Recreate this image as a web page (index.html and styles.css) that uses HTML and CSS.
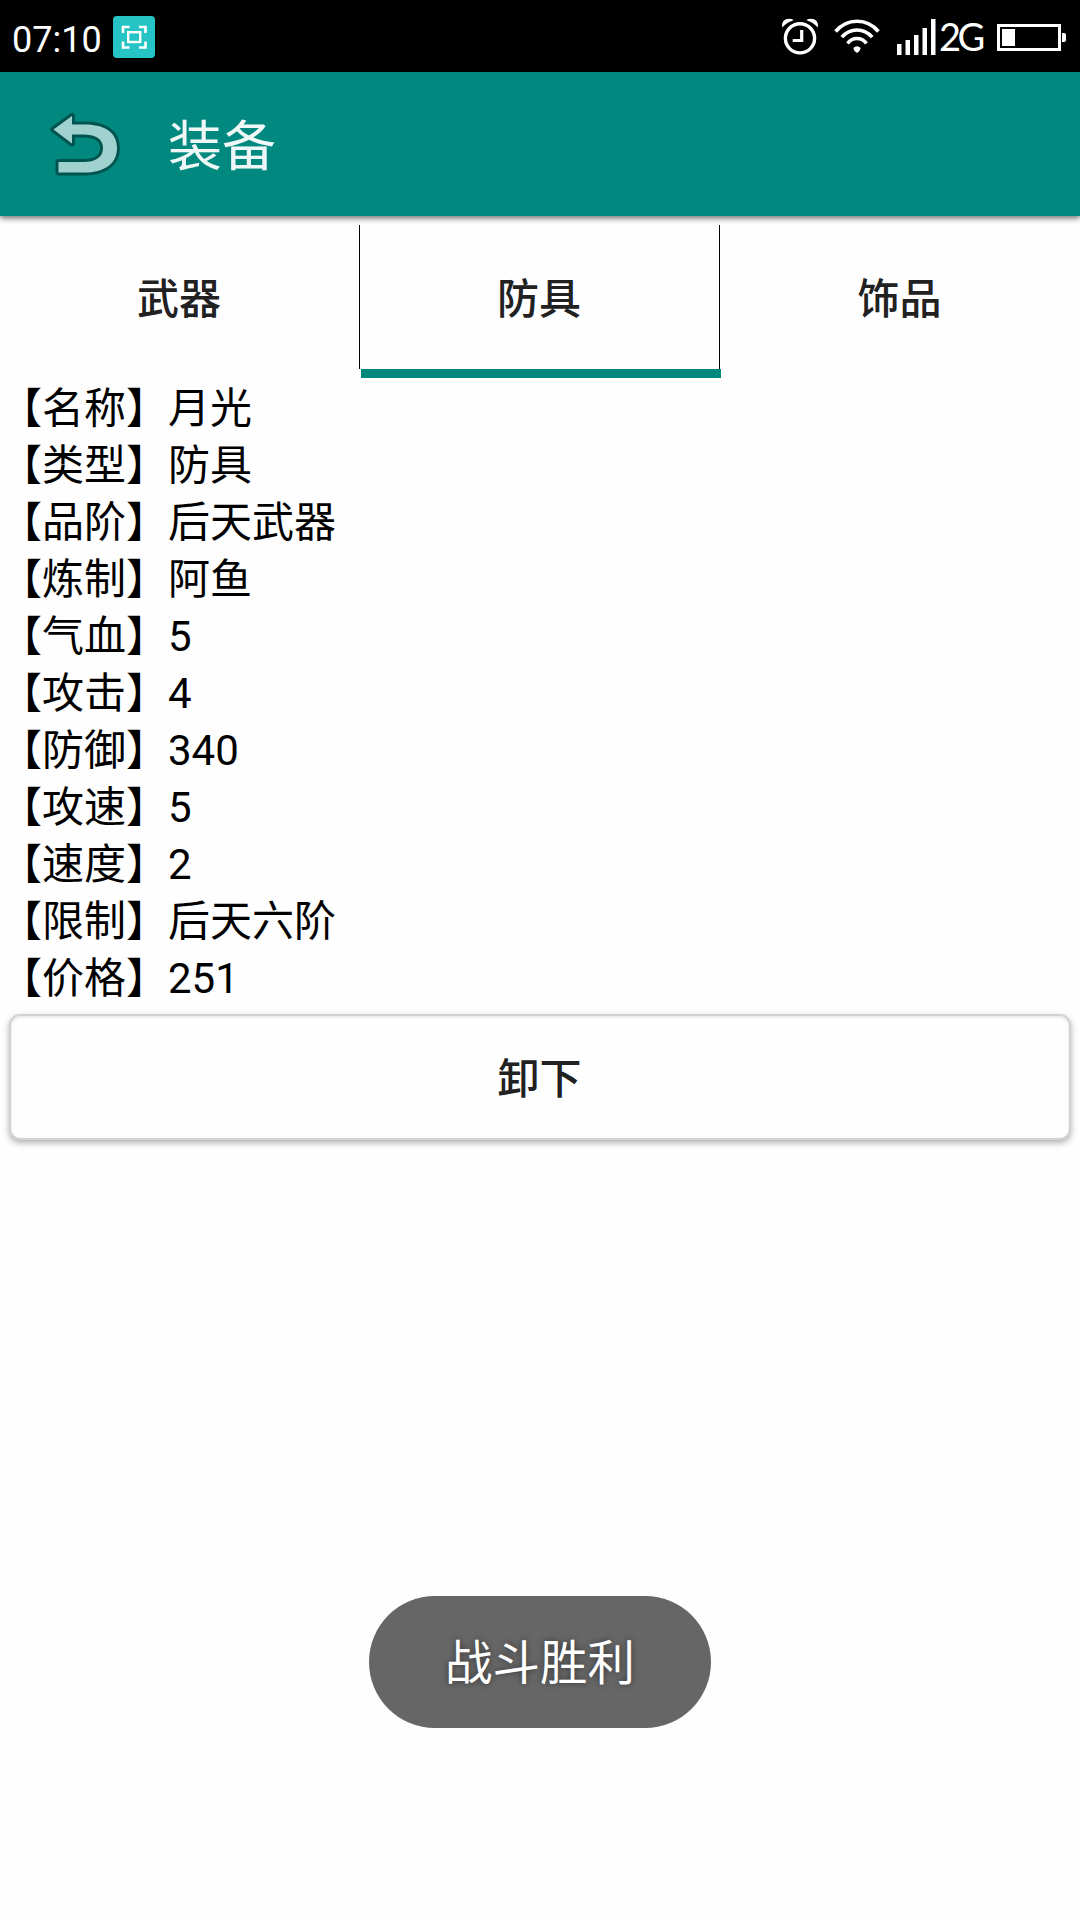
FILE: index.html
```html
<!DOCTYPE html>
<html lang="zh-CN">
<head>
  <meta charset="utf-8">
  <title>装备</title>
  <link rel="stylesheet" href="styles.css">
</head>
<body>
  <div class="status-bar">
    <span class="clock">07:10</span>
    <svg class="capture-icon" width="42" height="42" viewBox="0 0 42 42" fill="none" stroke="#fff">
      <rect width="42" height="42" rx="4" fill="#26c4c4" stroke="none"/>
      <rect x="15.2" y="16.2" width="12" height="9.8" stroke-width="2.4"/>
      <path d="M10 17v-6h6.5M26 11h6.500v6M32.500 25.500v6H26M16.500 31.500H10v-6" stroke-width="2.6"/>
    </svg>
    <div class="status-icons">
      <svg class="alarm" width="38" height="38" viewBox="0 0 38 38" fill="none" stroke="#fff">
        <circle cx="19" cy="21.300" r="14.600" stroke-width="3.4"/>
        <path d="M20.700 13v10.500h-9" stroke-width="3.2"/>
        <path d="M1.200 10.500Q0 1.500 9 1.800Q12 2 12.500 3.200Q6 5 1.200 10.500ZM36.800 10.500Q38 1.500 29 1.800Q26 2 25.500 3.200Q32 5 36.800 10.500Z" fill="#fff" stroke="none"/>
      </svg>
      <svg class="wifi" width="46" height="36" viewBox="0 0 46 36" fill="none" stroke="#fff" stroke-width="3.6">
        <path d="M1.600 13.500Q10 3.200 23 3.200T44.400 13.500"/>
        <path d="M7.800 19.200Q14 12 23 12T38.200 19.200"/>
        <path d="M13.600 25.500Q17 20.500 23 20.500T32.400 25.500"/>
        <path d="M19.300 30Q23 26.500 26.700 30Q26.500 32.500 23 35Q19.500 32.500 19.300 30Z" fill="#fff" stroke="none"/>
      </svg>
      <svg class="signal" width="40" height="36" viewBox="0 0 40 36" fill="#fff">
        <rect x="0" y="25" width="4.500" height="11"/>
        <rect x="8.500" y="21" width="4.500" height="15"/>
        <rect x="17" y="16" width="4.500" height="20"/>
        <rect x="25.500" y="9" width="4.500" height="27"/>
        <rect x="34" y="0" width="4.500" height="36"/>
      </svg>
      <span class="network">2G</span>
      <svg class="battery" width="70" height="28" viewBox="0 0 70 28">
        <rect x="1.500" y="1.500" width="61" height="24" fill="none" stroke="#fff" stroke-width="3"/>
        <rect x="5" y="5" width="13" height="17" fill="#fff"/>
        <path d="M65 9h2q2 0 2 2v5q0 2-2 2h-2z" fill="#fff"/>
      </svg>
    </div>
  </div>

  <header class="app-bar">
    <svg class="back" width="72" height="66" viewBox="0 0 72 66">
      <path d="M5.500 18.500L24 5v8.500h13C53 13.500 69 19 69 37S53 61.500 37 61.500H10.500V51h25c12 0 19.500-4.500 19.500-14S47 23.500 35 23.500H24v9Z" fill="#9fd2cf" stroke="#00544f" stroke-width="6" stroke-linejoin="round" paint-order="stroke"/>
    </svg>
    <h1>装备</h1>
  </header>

  <nav class="tabs">
    <button class="tab">武器</button>
    <button class="tab active">防具</button>
    <button class="tab">饰品</button>
  </nav>

  <main>
    <div class="details">
      <p>【名称】月光</p>
      <p>【类型】防具</p>
      <p>【品阶】后天武器</p>
      <p>【炼制】阿鱼</p>
      <p>【气血】5</p>
      <p>【攻击】4</p>
      <p>【防御】340</p>
      <p>【攻速】5</p>
      <p>【速度】2</p>
      <p>【限制】后天六阶</p>
      <p>【价格】251</p>
    </div>
    <button class="unequip">卸下</button>
  </main>

  <div class="toast">战斗胜利</div>
</body>
</html>
```
FILE: styles.css
```css
* {
  box-sizing: border-box;
}

body {
  margin: 0;
  height: 1920px;
  background: #fefefe;
  color: #000;
  font-family: Roboto, "Noto Sans CJK SC", sans-serif;
  font-size: 42px;
  text-spacing-trim: space-all;
  overflow: hidden;
}

button {
  padding: 0 1px 4px 0;
  border: none;
  background: none;
  font: inherit;
  font-weight: 500;
  color: #212121;
}

.status-bar {
  display: flex;
  align-items: flex-start;
  height: 72px;
  padding: 16px 13px 0 12px;
  background: #000;
  color: #fff;
}

.clock {
  width: 101px;
  font-size: 36px;
  line-height: 48px;
}

.status-icons {
  display: flex;
  margin-left: auto;
}

.alarm {
  margin: 1px 15px 0 0;
}

.wifi {
  margin: 2px 17px 0 0;
}

.signal {
  margin-top: 3px;
}

.network {
  width: 60px;
  padding-left: 2px;
  font-family: Lato, sans-serif;
  font-size: 38px;
  letter-spacing: -3.5px;
  line-height: 41px;
}

.battery {
  margin-top: 8px;
}

.app-bar {
  display: flex;
  align-items: center;
  height: 144px;
  padding-left: 48px;
  background: #018980;
  box-shadow: 0 2px 6px rgba(0, 0, 0, 0.6);
}

.app-bar h1 {
  margin: 0 0 0 48px;
  padding-bottom: 4px;
  font-size: 54px;
  font-weight: 400;
  color: #eff8f7;
}

.tabs {
  display: flex;
  height: 153px;
  margin-top: 9px;
}

.tab {
  position: relative;
  width: 360px;
  height: 144px;
  border-right: 1px solid #000;
}

.tab:last-child {
  border-right: none;
}

.tab.active::after {
  content: "";
  position: absolute;
  top: 144px;
  left: 1px;
  width: 360px;
  height: 9px;
  background: #018980;
}

.details {
  padding: 2px 0 7px;
}

.details p {
  height: 57px;
  margin: 0;
  line-height: 57px;
}

.unequip {
  display: block;
  width: 1062px;
  height: 126px;
  margin: 0 auto;
  border: 2px solid #d2d2d2;
  border-radius: 11px;
  background: #fefefe;
  box-shadow: 0 3px 6px rgba(0, 0, 0, 0.3), inset 0 1px 3px rgba(0, 0, 0, 0.12);
}

.toast {
  position: absolute;
  top: 1596px;
  left: 369px;
  width: 342px;
  height: 132px;
  border-radius: 66px;
  background: #666;
  color: #fff;
  font-size: 47.5px;
  line-height: 136px;
  text-align: center;
  text-shadow: 0 0 6px rgba(0, 0, 0, 0.5);
}
```
